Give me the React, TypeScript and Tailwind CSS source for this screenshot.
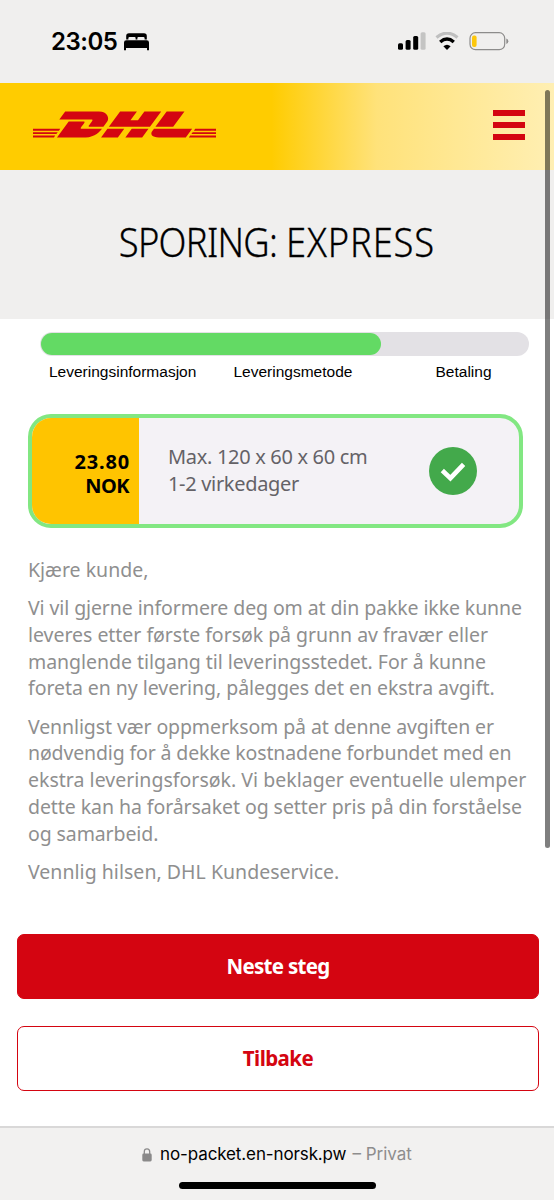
import type { ReactNode } from "react";
import { SiDhl } from "react-icons/si";

interface Line {
  text: string;
  tracking: string;
}

const greeting: Line[] = [{ text: "Kjære kunde,", tracking: "tracking-normal" }];

const notice: Line[] = [
  { text: "Vi vil gjerne informere deg om at din pakke ikke kunne", tracking: "tracking-[-0.1px]" },
  { text: "leveres etter første forsøk på grunn av fravær eller", tracking: "tracking-[-0.03px]" },
  { text: "manglende tilgang til leveringsstedet. For å kunne", tracking: "tracking-[-0.04px]" },
  { text: "foreta en ny levering, pålegges det en ekstra avgift.", tracking: "tracking-[-0.05px]" },
];

const details: Line[] = [
  { text: "Vennligst vær oppmerksom på at denne avgiften er", tracking: "tracking-[-0.1px]" },
  { text: "nødvendig for å dekke kostnadene forbundet med en", tracking: "tracking-[-0.14px]" },
  { text: "ekstra leveringsforsøk. Vi beklager eventuelle ulemper", tracking: "tracking-[0.02px]" },
  { text: "dette kan ha forårsaket og setter pris på din forståelse", tracking: "tracking-[-0.07px]" },
  { text: "og samarbeid.", tracking: "tracking-[-0.1px]" },
];

const signature: Line[] = [
  { text: "Vennlig hilsen, DHL Kundeservice.", tracking: "tracking-[0.03px]" },
];

function StatusBar() {
  return (
    <div className="flex h-[83px] items-start bg-[#f0efee] pl-[51px] pr-[45px] text-black">
      <span className="mt-[26px] w-[67px] font-['Inter',sans-serif] text-[24px] font-semibold leading-[32px] tracking-[-0.5px]">
        23:05
      </span>
      <svg className="ml-[6px] mt-[33px] h-[18px] w-[25px]" viewBox="0 0 25 18">
        <path d="M2.2 6.5V3Q2.2.3 5 .3h15Q22.8.3 22.8 3v3.5h-2.2V5.2Q20.6 4 19.4 4h-5Q13.4 4 13.4 5v1.5h-1.8V5q0-1-1-1h-5Q4.4 4 4.4 5.2v1.3z" />
        <path d="M0 17.2V9.5Q0 7.2 2.3 7.2h20.4Q25 7.2 25 9.5v7.7h-2V15H2v2.2z" />
      </svg>
      <div className="ml-auto mt-[32px] flex">
        <svg className="h-[18px] w-[28px]" viewBox="0 0 28 18">
          <rect x="0" y="11.3" width="5" height="6.5" rx="1.5" />
          <rect x="7.6" y="8" width="5" height="9.8" rx="1.5" />
          <rect x="15.2" y="4" width="5" height="13.8" rx="1.5" />
          <rect x="22.6" y="0.3" width="5" height="17.5" rx="1.5" fill="#c4c4c3" />
        </svg>
        <svg className="ml-[9px] mr-px h-[18px] w-[24px]" viewBox="0 0 24 18" fill="none">
          <path d="M1.5 5.6Q12-3.2 22.5 5.6" stroke="#bfbfbf" strokeWidth="3.2" />
          <path d="M5.2 10Q12 4.1 18.8 10" stroke="#000" strokeWidth="3.4" />
          <path d="M12 18L8.4 14.3Q12 11.2 15.6 14.3z" fill="#000" />
        </svg>
        <svg className="ml-[9px] h-[19px] w-[40px]" viewBox="0 0 40 19">
          <rect x="1" y="0.7" width="34.7" height="17" rx="5.5" fill="none" stroke="#8d8c8b" strokeWidth="1.2" />
          <rect x="3" y="3.4" width="4.6" height="11.6" rx="2" fill="#fdc70c" />
          <path d="M37.3 6.5Q39.3 7.3 39.3 9.2T37.3 12z" fill="#8d8c8b" />
        </svg>
      </div>
    </div>
  );
}

function Header() {
  return (
    <header className="flex h-[87px] items-center justify-between bg-linear-[90deg,#ffcc00_0%,#ffcc00_49%,#ffe27a_68%,#ffefb3_100%] pb-[4px] pl-[33px] pr-[29px]">
      <SiDhl className="h-[27px] w-[183px] text-[#d40511]" preserveAspectRatio="xMidYMid slice" />
      <div className="flex w-8 flex-col gap-[6px]">
        <span className="h-[6px] bg-[#d40511]" />
        <span className="h-[6px] bg-[#d40511]" />
        <span className="h-[6px] bg-[#d40511]" />
      </div>
    </header>
  );
}

function Progress() {
  return (
    <div className="pt-[13px]">
      <div className="ml-10 h-6 w-[489px] rounded-full bg-[#e3e1e5] p-px">
        <div className="h-[22px] w-[340px] rounded-full bg-[#63da64]" />
      </div>
      <div className="mt-[6px] flex pl-[49px] font-['Liberation_Sans',Arial,sans-serif] text-[15.5px] leading-5 text-black">
        <span className="w-[184.5px]">Leveringsinformasjon</span>
        <span className="w-[202px]">Leveringsmetode</span>
        <span>Betaling</span>
      </div>
    </div>
  );
}

function PriceCard() {
  return (
    <div className="ml-7 mt-8 flex h-[114px] w-[495px] overflow-hidden rounded-[23px] border-4 border-[#82e782] bg-[#f4f2f6]">
      <div className="flex w-[107px] flex-col items-end justify-center bg-[#ffc400] pr-[9px] pt-[5px] text-[20px] font-bold leading-6 text-black">
        <span className="tracking-[0.8px]">23.80</span>
        <span className="mr-px tracking-[-0.5px]">NOK</span>
      </div>
      <div className="flex flex-col justify-center pl-[29px] text-[20px] leading-[26.7px] tracking-[-0.32px] text-[#646267]">
        <span>Max. 120 x 60 x 60 cm</span>
        <span>1-2 virkedager</span>
      </div>
      <svg className="ml-auto mr-[42px] mt-[29px] size-12" viewBox="0 0 48 48">
        <circle cx="24" cy="24" r="24" fill="#43a94b" />
        <path d="M13.3 23.5L21.4 31.2L34.6 17.3" fill="none" stroke="#fff" strokeWidth="4.6" />
      </svg>
    </div>
  );
}

function Paragraph({ lines }: { lines: Line[] }) {
  return (
    <p className="flex flex-col">
      {lines.map((line) => (
        <span key={line.text} className={`whitespace-nowrap ${line.tracking}`}>
          {line.text}
        </span>
      ))}
    </p>
  );
}

function Button({ className, children }: { className: string; children: ReactNode }) {
  return (
    <button
      type="button"
      className={`ml-[17px] block h-[65px] w-[522px] rounded-[7px] border border-[#d40511] pb-[2px] text-[20.5px] font-bold ${className}`}
    >
      {children}
    </button>
  );
}

function AddressBar() {
  return (
    <footer className="mt-auto flex h-[74px] flex-col items-center border-t-2 border-[#d9d8d8] bg-[#f2f1f0] font-['Inter',sans-serif]">
      <div className="mt-[15px] flex h-6 items-center text-[17px] text-black">
        <svg className="mr-[8px] h-[14px] w-[10px]" viewBox="0 0 10 14" fill="#8a8989">
          <path d="M2.3 6V3.8Q2.3.8 5 .8T7.7 3.8V6" fill="none" stroke="#8a8989" strokeWidth="1.3" />
          <rect x="0.3" y="5.6" width="9.4" height="7.8" rx="1.4" />
        </svg>
        <span className="tracking-[-0.12px]">no-packet.en-norsk.pw</span>
        <span className="ml-[6px] text-[#8e8d8d]">– Privat</span>
      </div>
      <div className="mt-[15px] h-[7px] w-[197px] rounded-full bg-black" />
    </footer>
  );
}

export default function App() {
  return (
    <div className="relative flex h-[1200px] w-[554px] flex-col overflow-hidden bg-white font-['Noto_Sans',sans-serif]">
      <StatusBar />
      <Header />
      <div className="flex h-[149px] items-center justify-center bg-[#f0efee] pb-[4px]">
        <h1 className="scale-x-[0.92] whitespace-nowrap text-[39.5px] font-light leading-none text-black [-webkit-text-stroke:0.3px_black]">
          <span className="tracking-[-0.75px]">SPORING: </span>
          <span className="tracking-[0.95px]">EXPRESS</span>
        </h1>
      </div>
      <Progress />
      <PriceCard />

      <div className="ml-7 mt-[29px] flex flex-col gap-[11.4px] text-[19.5px] leading-[26.75px] text-[#8f8f8f]">
        <Paragraph lines={greeting} />
        <Paragraph lines={notice} />
        <Paragraph lines={details} />
        <Paragraph lines={signature} />
      </div>

      <div className="mt-[49px] flex flex-col gap-[27px]">
        <Button className="bg-[#d40511] tracking-[-0.7px] text-white">Neste steg</Button>
        <Button className="bg-white tracking-[-0.55px] text-[#d40511]">Tilbake</Button>
      </div>

      <AddressBar />

      {/* scroll indicator */}
      <div className="absolute left-[545px] top-[90px] h-[758px] w-[5px] rounded-full bg-black/50" />
    </div>
  );
}
